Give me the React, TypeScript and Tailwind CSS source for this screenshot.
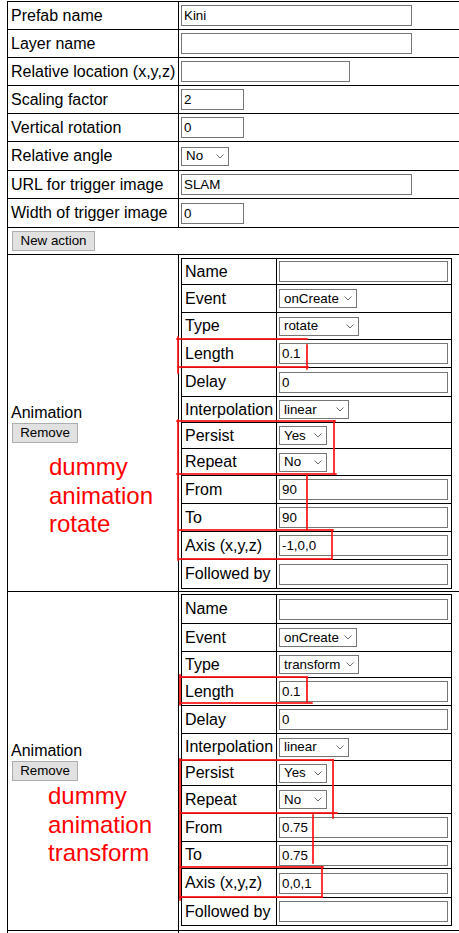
import React from "react";

type Kind = "input" | "select" | "none";
type Field = { label: string; h: string; kind: Kind; w: string; value?: string };

const Chevron = () => (
  <svg width="8" height="5" viewBox="0 0 8 5" className="shrink-0">
    <polyline points="0.5,0.5 4,4 7.5,0.5" fill="none" stroke="#6b6b6b" strokeWidth="1" />
  </svg>
);

function TextBox({ w, value }: { w: string; value?: string }) {
  return (
    <input
      readOnly
      defaultValue={value ?? ""}
      className={`${w} h-[21px] border border-[#767676] bg-white px-[2px] text-[13.33px] text-black outline-none`}
    />
  );
}

function SelectBox({ w, value }: { w: string; value?: string }) {
  return (
    <div
      className={`${w} h-[19px] border border-[#767676] bg-white pl-[4px] pr-[4px] flex items-center justify-between text-[13.33px] leading-none text-black`}
    >
      <span>{value}</span>
      <Chevron />
    </div>
  );
}

function Control({ f }: { f: Field }) {
  if (f.kind === "input") return <TextBox w={f.w} value={f.value} />;
  if (f.kind === "select") return <SelectBox w={f.w} value={f.value} />;
  return null;
}

const outerFields: Field[] = [
  { label: "Prefab name", h: "h-[28px]", kind: "input", w: "w-[231px]", value: "Kini" },
  { label: "Layer name", h: "h-[28px]", kind: "input", w: "w-[231px]", value: "" },
  { label: "Relative location (x,y,z)", h: "h-[28px]", kind: "input", w: "w-[169px]", value: "" },
  { label: "Scaling factor", h: "h-[28px]", kind: "input", w: "w-[63px]", value: "2" },
  { label: "Vertical rotation", h: "h-[28px]", kind: "input", w: "w-[63px]", value: "0" },
  { label: "Relative angle", h: "h-[29px]", kind: "select", w: "w-[48px]", value: "No" },
  { label: "URL for trigger image", h: "h-[28px]", kind: "input", w: "w-[231px]", value: "SLAM" },
  { label: "Width of trigger image", h: "h-[29px]", kind: "input", w: "w-[63px]", value: "0" },
];

const anim1: Field[] = [
  { label: "Name", h: "h-[26px]", kind: "input", w: "w-[169px]", value: "" },
  { label: "Event", h: "h-[28px]", kind: "select", w: "w-[78px]", value: "onCreate" },
  { label: "Type", h: "h-[27px]", kind: "select", w: "w-[80px]", value: "rotate" },
  { label: "Length", h: "h-[28px]", kind: "input", w: "w-[169px]", value: "0.1" },
  { label: "Delay", h: "h-[29px]", kind: "input", w: "w-[169px]", value: "0" },
  { label: "Interpolation", h: "h-[26px]", kind: "select", w: "w-[70px]", value: "linear" },
  { label: "Persist", h: "h-[26px]", kind: "select", w: "w-[48px]", value: "Yes" },
  { label: "Repeat", h: "h-[27px]", kind: "select", w: "w-[48px]", value: "No" },
  { label: "From", h: "h-[28px]", kind: "input", w: "w-[169px]", value: "90" },
  { label: "To", h: "h-[28px]", kind: "input", w: "w-[169px]", value: "90" },
  { label: "Axis (x,y,z)", h: "h-[28px]", kind: "input", w: "w-[169px]", value: "-1,0,0" },
  { label: "Followed by", h: "h-[29px]", kind: "input", w: "w-[169px]", value: "" },
];

const anim2: Field[] = [
  { label: "Name", h: "h-[29px]", kind: "input", w: "w-[169px]", value: "" },
  { label: "Event", h: "h-[28px]", kind: "select", w: "w-[78px]", value: "onCreate" },
  { label: "Type", h: "h-[26px]", kind: "select", w: "w-[80px]", value: "transform" },
  { label: "Length", h: "h-[28px]", kind: "input", w: "w-[169px]", value: "0.1" },
  { label: "Delay", h: "h-[28px]", kind: "input", w: "w-[169px]", value: "0" },
  { label: "Interpolation", h: "h-[27px]", kind: "select", w: "w-[70px]", value: "linear" },
  { label: "Persist", h: "h-[25px]", kind: "select", w: "w-[48px]", value: "Yes" },
  { label: "Repeat", h: "h-[28px]", kind: "select", w: "w-[48px]", value: "No" },
  { label: "From", h: "h-[28px]", kind: "input", w: "w-[169px]", value: "0.75" },
  { label: "To", h: "h-[27px]", kind: "input", w: "w-[169px]", value: "0.75" },
  { label: "Axis (x,y,z)", h: "h-[29px]", kind: "input", w: "w-[169px]", value: "0,0,1" },
  { label: "Followed by", h: "h-[28px]", kind: "input", w: "w-[169px]", value: "" },
];

function Btn({ w, children }: { w: string; children: React.ReactNode }) {
  return (
    <div
      className={`${w} h-[20px] border border-[#adadad] bg-[#e1e1e1] flex items-center justify-center text-[13.33px] leading-none text-black`}
    >
      {children}
    </div>
  );
}

function OuterRow({ f }: { f: Field }) {
  return (
    <div className={`flex ${f.h} border-b border-black`}>
      <div className="w-[171px] shrink-0 border-r border-black pl-[3px] flex items-center text-[16px] leading-[18px] whitespace-nowrap">
        {f.label}
      </div>
      <div className="flex-1 pl-[2px] flex items-center">
        <Control f={f} />
      </div>
    </div>
  );
}

function Nested({ rows }: { rows: Field[] }) {
  return (
    <div className="w-[271px] border-t border-l border-r border-black">
      {rows.map((f) => (
        <div key={f.label} className={`flex ${f.h} border-b border-black`}>
          <div className="w-[95px] shrink-0 border-r border-black pl-[3px] flex items-center text-[16px] leading-[18px] whitespace-nowrap">
            {f.label}
          </div>
          <div className="flex-1 pl-[2px] flex items-center">
            <Control f={f} />
          </div>
        </div>
      ))}
    </div>
  );
}

function AnimRow({
  rows,
  rowH,
  pad,
  note,
  notePos,
}: {
  rows: Field[];
  rowH: string;
  pad: string;
  note: string[];
  notePos: string;
}) {
  return (
    <div className={`flex ${rowH} border-b border-black`}>
      <div className="relative w-[171px] shrink-0 border-r border-black pl-[3px] flex flex-col justify-center items-start">
        <div className="text-[16px] leading-[18px]">Animation</div>
        <div className="mt-[1px] ml-[1px]">
          <Btn w="w-[66px]">Remove</Btn>
        </div>
        <div className={`absolute ${notePos} text-[24px] leading-[28.5px] text-[#ff0000]`}>
          {note.map((n) => (
            <div key={n}>{n}</div>
          ))}
        </div>
      </div>
      <div className={`flex-1 pl-[2px] ${pad}`}>
        <Nested rows={rows} />
      </div>
    </div>
  );
}

export default function App() {
  const red = "#ff1010";
  return (
    <div className="relative w-[459px] h-[933px] overflow-hidden bg-white text-black font-['Liberation_Sans',Arial,sans-serif]">
      <div className="ml-[7px] mt-[1px] w-[500px] border-l border-t border-black">
        {outerFields.map((f) => (
          <OuterRow key={f.label} f={f} />
        ))}
        <div className="flex h-[27px] border-b border-black items-center pl-[4px]">
          <Btn w="w-[83px]">New action</Btn>
        </div>
        <AnimRow
          rows={anim1}
          rowH="h-[337px]"
          pad="pt-[3px]"
          note={["dummy", "animation", "rotate"]}
          notePos="top-[198px] left-[41px]"
        />
        <AnimRow
          rows={anim2}
          rowH="h-[339px]"
          pad="pt-[2px]"
          note={["dummy", "animation", "transform"]}
          notePos="top-[190px] left-[40px]"
        />
        <div className="flex h-[28px] border-b border-black">
          <div className="w-[171px] shrink-0 border-r border-black" />
          <div className="flex-1" />
        </div>
      </div>

      <svg
        className="absolute inset-0 pointer-events-none"
        width="459"
        height="933"
        viewBox="0 0 459 933"
      >
        <g stroke={red} strokeWidth="2" strokeOpacity="0.85" fill="none" strokeLinecap="round">
          {/* first animation */}
          <path d="M177 339 H307" />
          <path d="M178 367 H308" />
          <path d="M178 337 V373" />
          <path d="M307 345 V369" />
          <path d="M177 421 H335" />
          <path d="M334 421 V474" />
          <path d="M177 474 H336" />
          <path d="M178 420 V560" />
          <path d="M307 475 V530" />
          <path d="M179 530 H333" />
          <path d="M332 530 V559" />
          <path d="M179 559 H332" />
          {/* second animation */}
          <path d="M180 677 H307" />
          <path d="M180 703 H312" />
          <path d="M180 675 V705" />
          <path d="M307 677 V702" />
          <path d="M180 760 H333" />
          <path d="M333 760 V818" />
          <path d="M180 813 H337" />
          <path d="M180 759 V900" />
          <path d="M313 815 V863" />
          <path d="M180 867 H323" />
          <path d="M322 867 V897" />
          <path d="M180 897 H322" />
        </g>
      </svg>
    </div>
  );
}
